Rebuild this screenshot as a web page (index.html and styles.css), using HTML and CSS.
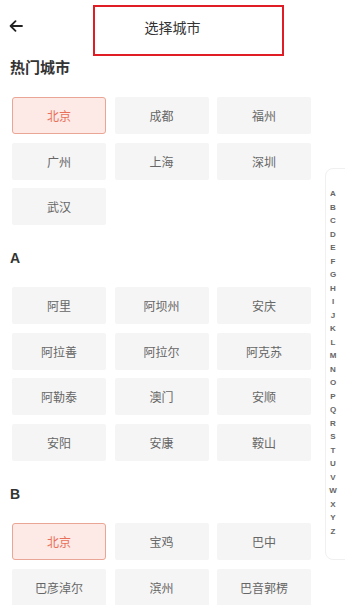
FILE: index.html
```html
<html>
<head>
<meta charset="utf-8">
<link rel="stylesheet" href="styles.css">
</head>
<body>
<div class="page">
    <div class="top-bar">
        <div class="back-btn">
            <svg width="14" height="12" viewBox="0 0 14 12"><path d="M13 6H2M6.5 1.2L1.6 6l4.9 4.8" fill="none" stroke="#222" stroke-width="1.8" stroke-linecap="round" stroke-linejoin="round"/></svg>
        </div>
        <div class="title-box">选择城市</div>
    </div>

    <div class="section-title first">热门城市</div>
    <div class="city-grid">
        <div class="city-item active">北京</div>
        <div class="city-item">成都</div>
        <div class="city-item">福州</div>
        <div class="city-item">广州</div>
        <div class="city-item">上海</div>
        <div class="city-item">深圳</div>
        <div class="city-item">武汉</div>
    </div>

    <div class="section-title letter">A</div>
    <div class="city-grid">
        <div class="city-item">阿里</div>
        <div class="city-item">阿坝州</div>
        <div class="city-item">安庆</div>
        <div class="city-item">阿拉善</div>
        <div class="city-item">阿拉尔</div>
        <div class="city-item">阿克苏</div>
        <div class="city-item">阿勒泰</div>
        <div class="city-item">澳门</div>
        <div class="city-item">安顺</div>
        <div class="city-item">安阳</div>
        <div class="city-item">安康</div>
        <div class="city-item">鞍山</div>
    </div>

    <div class="section-title letter">B</div>
    <div class="city-grid">
        <div class="city-item active">北京</div>
        <div class="city-item">宝鸡</div>
        <div class="city-item">巴中</div>
        <div class="city-item">巴彦淖尔</div>
        <div class="city-item">滨州</div>
        <div class="city-item">巴音郭楞</div>
    </div>

    <div class="index-bar">
        <div>A</div><div>B</div><div>C</div><div>D</div><div>E</div><div>F</div><div>G</div>
        <div>H</div><div>I</div><div>J</div><div>K</div><div>L</div><div>M</div><div>N</div>
        <div>O</div><div>P</div><div>Q</div><div>R</div><div>S</div><div>T</div><div>U</div>
        <div>V</div><div>W</div><div>X</div><div>Y</div><div>Z</div>
    </div>
</div>
</body>
</html>
```

FILE: styles.css
```css
html, body {
    margin: 0;
    padding: 0;
    background: #fff;
    font-family: "Noto Sans CJK SC", "Noto Sans", sans-serif;
}

.page {
    position: relative;
    width: 345px;
    height: 605px;
    overflow: hidden;
}

.top-bar {
    display: flex;
    align-items: center;
    height: 56px;
    box-sizing: border-box;
    padding-top: 5px;
}

.back-btn {
    width: 14px;
    height: 12px;
    margin-left: 9px;
    margin-top: -9px;
    display: flex;
}

.title-box {
    margin-left: 70px;
    width: 191px;
    height: 51px;
    box-sizing: border-box;
    border: 2px solid #e01c24;
    display: flex;
    align-items: center;
    justify-content: center;
    padding-bottom: 8px;
    padding-right: 32px;
    font-size: 14px;
    color: #333;
}

.section-title {
    height: 20px;
    line-height: 20px;
    padding-left: 10px;
    font-size: 15px;
    font-weight: bold;
    color: #333;
    margin-top: 23px;
    margin-bottom: 19px;
}

.section-title.first {
    margin-top: 1px;
    margin-bottom: 20px;
}

.section-title.letter {
    font-family: "Liberation Sans", Arial, sans-serif;
    font-size: 14px;
}

.city-grid {
    display: grid;
    grid-template-columns: repeat(3, 94px);
    grid-auto-rows: 37px;
    column-gap: 8.5px;
    row-gap: 8.6px;
    padding-left: 12px;
}

.city-item {
    background: #f5f5f5;
    border-radius: 2px;
    display: flex;
    align-items: center;
    justify-content: center;
    font-size: 12px;
    color: #666;
}

.city-item.active {
    background: #fde9e5;
    border: 1px solid #e9a595;
    box-sizing: border-box;
    border-radius: 3px;
    color: #e8705a;
}

.index-bar {
    position: absolute;
    left: 325px;
    top: 168px;
    width: 30px;
    height: 392px;
    box-sizing: border-box;
    padding-top: 18px;
    border: 1px solid #f0f0f0;
    border-radius: 8px;
    background: #fff;
}

.index-bar div {
    width: 14px;
    height: 13.5px;
    line-height: 13.5px;
    text-align: center;
    font-family: "Liberation Sans", Arial, sans-serif;
    font-size: 8px;
    font-weight: bold;
    color: #666;
}
```
